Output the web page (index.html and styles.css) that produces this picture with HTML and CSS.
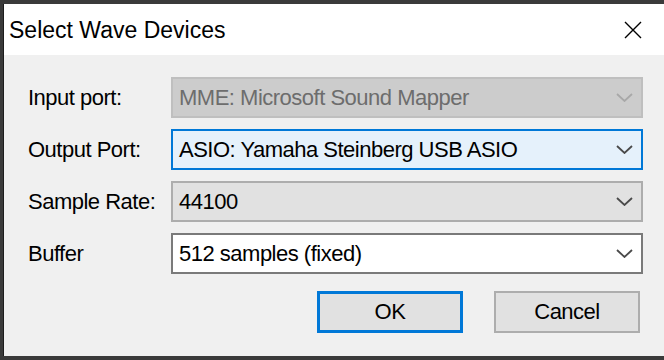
FILE: index.html
```html
<!DOCTYPE html>
<html lang="en">
<head>
    <meta charset="UTF-8">
    <title>Select Wave Devices</title>
    <link rel="stylesheet" href="styles.css">
</head>
<body>
    <div class="dialog">
        <div class="titlebar">
            <span class="title">Select Wave Devices</span>
            <svg class="close" width="18" height="18" viewBox="0 0 18 18">
                <path d="M1 1 L17 17 M17 1 L1 17" stroke="#000" stroke-width="1.4" fill="none"/>
            </svg>
        </div>
        <div class="content">
            <div class="row">
                <label>Input port:</label>
                <div class="combo disabled">
                    <span>MME: Microsoft Sound Mapper</span>
                    <svg class="chev" width="17" height="9" viewBox="0 0 17 9"><polyline points="1,1 8.5,8 16,1"/></svg>
                </div>
            </div>
            <div class="row">
                <label>Output Port:</label>
                <div class="combo focused">
                    <span>ASIO: Yamaha Steinberg USB ASIO</span>
                    <svg class="chev" width="17" height="9" viewBox="0 0 17 9"><polyline points="1,1 8.5,8 16,1"/></svg>
                </div>
            </div>
            <div class="row">
                <label>Sample Rate:</label>
                <div class="combo">
                    <span>44100</span>
                    <svg class="chev" width="17" height="9" viewBox="0 0 17 9"><polyline points="1,1 8.5,8 16,1"/></svg>
                </div>
            </div>
            <div class="row">
                <label>Buffer</label>
                <div class="combo plain">
                    <span>512 samples (fixed)</span>
                    <svg class="chev" width="17" height="9" viewBox="0 0 17 9"><polyline points="1,1 8.5,8 16,1"/></svg>
                </div>
            </div>
            <div class="buttons">
                <button class="btn default">OK</button>
                <button class="btn">Cancel</button>
            </div>
        </div>
    </div>
</body>
</html>
```

FILE: styles.css
```css
body {
    margin: 0;
    background-color: #3a3a3a;
    font-family: "Liberation Sans", Arial, sans-serif;
    height: 360px;
    overflow: hidden;
}
.dialog {
    margin: 4px 0 0 3px;
    height: 352px;
    border-left: 1px solid #1c1c1c;
    background-color: #f0f0f0;
}
.titlebar {
    height: 51px;
    background-color: #fff;
    display: flex;
    align-items: center;
    justify-content: space-between;
    padding: 0 22px 0 5px;
}
.title {
    font-size: 23px;
    color: #000;
    margin-top: 2px;
}
.close {
    display: block;
}
.content {
    padding: 22px 21px 0 24px;
    display: flex;
    flex-direction: column;
    gap: 11px;
}
.row {
    display: flex;
    align-items: center;
    height: 41px;
}
.row label {
    width: 143px;
    font-size: 22px;
    letter-spacing: -0.5px;
    color: #000;
}
.combo {
    flex: 1;
    height: 41px;
    box-sizing: border-box;
    border: 2px solid #adadad;
    background-color: #e1e1e1;
    display: flex;
    align-items: center;
    justify-content: space-between;
    padding: 0 8px 0 6px;
    font-size: 22px;
    letter-spacing: -0.5px;
    color: #000;
}
.combo.disabled {
    background-color: #cccccc;
    border-color: #bfbfbf;
    color: #6d6d6d;
}
.combo.focused {
    background-color: #e5f1fb;
    border-color: #0078d7;
}
.combo.plain {
    background-color: #fff;
    border-color: #7a7a7a;
}
.chev {
    display: block;
    fill: none;
    stroke: #4a4a4a;
    stroke-width: 1.8;
}
.disabled .chev {
    stroke: #a8a8a8;
}
.buttons {
    display: flex;
    justify-content: flex-end;
    gap: 31px;
    margin-top: 6px;
    padding-right: 3px;
}
.btn {
    width: 146px;
    height: 42px;
    box-sizing: border-box;
    border: 2px solid #adadad;
    background-color: #e1e1e1;
    font-family: "Liberation Sans", Arial, sans-serif;
    font-size: 22px;
    letter-spacing: -0.5px;
    color: #000;
    padding: 0;
}
.btn.default {
    border: 3px solid #0078d7;
}
```
